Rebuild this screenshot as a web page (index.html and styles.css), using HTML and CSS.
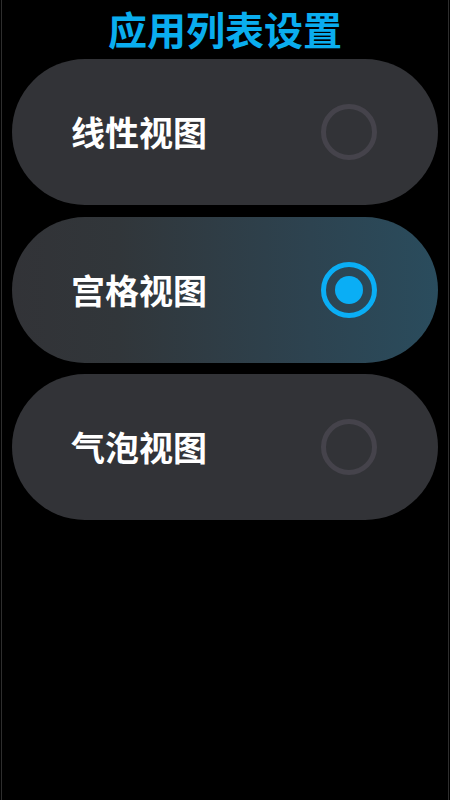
FILE: index.html
```html
<!DOCTYPE html>
<html lang="zh-CN">
<head>
<meta charset="utf-8">
<title>应用列表设置</title>
<link rel="stylesheet" href="styles.css">
</head>
<body>
<div class="screen">
  <h1 class="title">应用列表设置</h1>
  <div class="list">
    <div class="card">
      <span class="label">线性视图</span>
      <span class="radio"></span>
    </div>
    <div class="card card-active">
      <span class="label">宫格视图</span>
      <span class="radio radio-on"><span class="dot"></span></span>
    </div>
    <div class="card">
      <span class="label">气泡视图</span>
      <span class="radio"></span>
    </div>
  </div>
</div>
</body>
</html>
```
FILE: styles.css
```css
html, body {
  margin: 0;
  padding: 0;
  background: #000;
}
body {
  font-family: "Noto Sans CJK SC", "Noto Sans", sans-serif;
}
.screen {
  margin: 0 1px;
  border-left: 1px solid #2e2e2e;
  border-right: 1px solid #2e2e2e;
  min-height: 800px;
  box-sizing: border-box;
}
.title {
  margin: 0;
  height: 56px;
  line-height: 56px;
  text-align: center;
  font-size: 39px;
  font-weight: 700;
  color: #0aadef;
}
.list {
  margin: 3px 10px 0;
  display: flex;
  flex-direction: column;
  gap: 11.5px;
}
.card {
  height: 146px;
  border-radius: 73px;
  background: #323337;
  display: flex;
  align-items: center;
  justify-content: space-between;
  padding: 0 61px 0 59px;
}
.card-active {
  background: linear-gradient(to right, #323337 0%, #31363a 25%, #2d4350 70%, #2a4c5d 100%);
}
.label {
  color: #fff;
  font-size: 34px;
  font-weight: 700;
  line-height: 1;
}
.radio {
  width: 56px;
  height: 56px;
  box-sizing: border-box;
  border: 5px solid #45434b;
  border-radius: 50%;
  display: flex;
  align-items: center;
  justify-content: center;
}
.radio-on {
  border-color: #0aaef5;
}
.dot {
  width: 28px;
  height: 28px;
  border-radius: 50%;
  background: #0aaef5;
}
```
